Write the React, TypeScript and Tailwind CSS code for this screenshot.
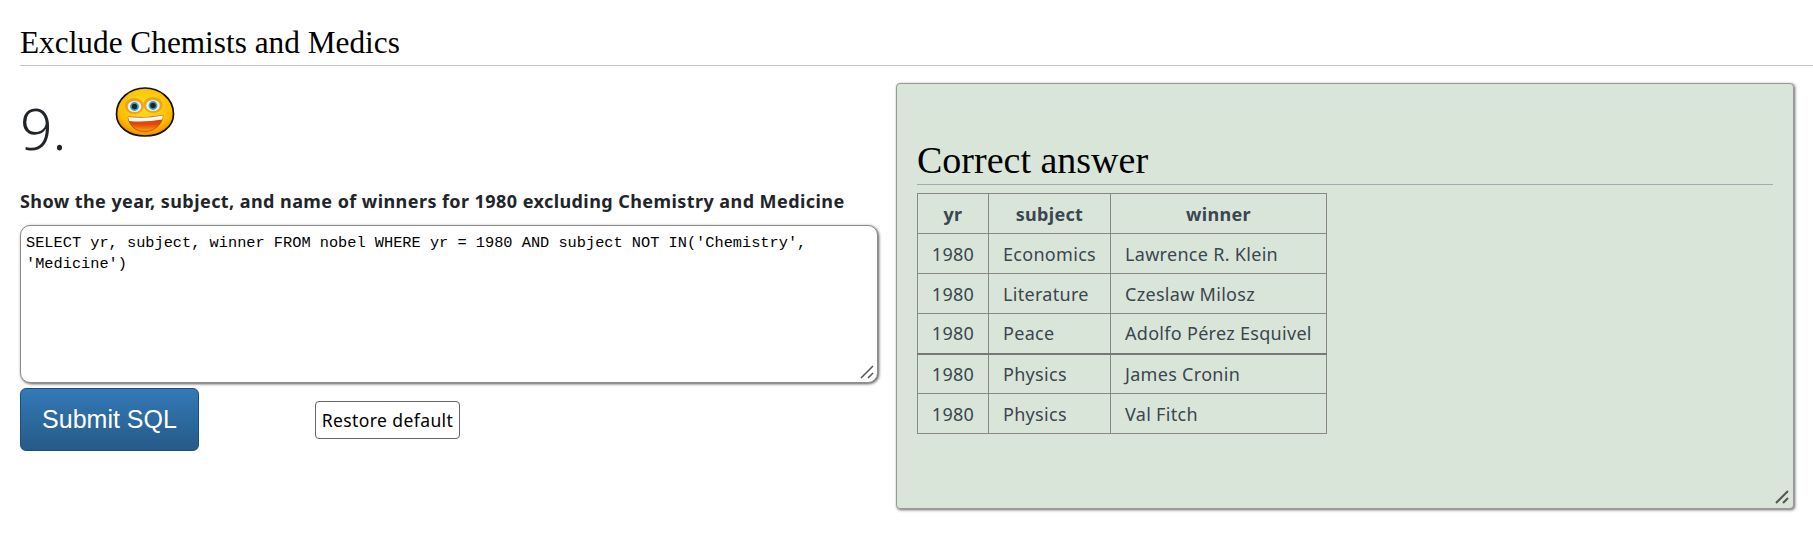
const rows = [
  ["1980", "Economics", "Lawrence R. Klein"],
  ["1980", "Literature", "Czeslaw Milosz"],
  ["1980", "Peace", "Adolfo Pérez Esquivel"],
  ["1980", "Physics", "James Cronin"],
  ["1980", "Physics", "Val Fitch"],
];

function Smiley() {
  return (
    <svg width="60" height="52" viewBox="0 0 60 52" className="ml-[49px] mt-[3px] shrink-0">
      <defs>
        <radialGradient id="face" cx="50%" cy="38%" r="62%">
          <stop offset="0%" stopColor="#ffe020" />
          <stop offset="75%" stopColor="#fdbc00" />
          <stop offset="100%" stopColor="#ea8c00" />
        </radialGradient>
        <linearGradient id="mouth" x1="0" y1="0" x2="0" y2="1">
          <stop offset="0%" stopColor="#d23606" />
          <stop offset="55%" stopColor="#e5480a" />
          <stop offset="100%" stopColor="#f9a414" />
        </linearGradient>
      </defs>
      <path
        d="M30 2 C44 2 58.5 12 58.5 28 C58.5 42 45 50 30 50 C15 50 1.5 42 1.5 28 C1.5 12 16 2 30 2 Z"
        fill="url(#face)"
        stroke="#141008"
        strokeWidth="1.7"
      />
      <ellipse cx="19.5" cy="20" rx="9.5" ry="8" fill="#e8951c" opacity="0.75" />
      <ellipse cx="38" cy="19" rx="9.5" ry="8" fill="#e8951c" opacity="0.75" />
      <ellipse cx="19.5" cy="20.5" rx="6.8" ry="5.6" fill="#e9f2f4" />
      <ellipse cx="38" cy="19.5" rx="6.8" ry="5.6" fill="#e9f2f4" />
      <circle cx="19.5" cy="20.5" r="4.4" fill="#2f9fc4" />
      <circle cx="38" cy="19.5" r="4.4" fill="#2f9fc4" />
      <circle cx="19.5" cy="20.5" r="2.7" fill="#17242c" />
      <circle cx="38" cy="19.5" r="2.7" fill="#17242c" />
      <path d="M13 31 Q30 33 48 29.5 C47 40 38 45.5 30 45.5 C20 45.5 14.5 40 13 31 Z" fill="url(#mouth)" stroke="#a83400" strokeWidth="0.6" />
      <path d="M13 31 Q30 33 48 29.5 L47.2 33.5 Q30 36.5 14.2 35 Z" fill="#fbfbfb" />
    </svg>
  );
}

function Grip({ width }: { width: number }) {
  return (
    <svg width="14" height="14" viewBox="0 0 14 14" className="absolute right-[4px] bottom-[4px] pointer-events-none">
      <path d="M1 13 L13 1 M8 13 L13 8" stroke="#555" strokeWidth={width} fill="none" />
    </svg>
  );
}

export default function App() {
  return (
    <div className="bg-white min-h-[559px] pl-5 font-['Noto_Sans',sans-serif] text-[#212529]">
      <h2 className="pt-[25px] pb-[5px] border-b border-[#c2c6ca] font-['Liberation_Serif',serif] text-[31.3px] leading-[35px] text-black">
        Exclude Chemists and Medics
      </h2>
      <div className="flex mt-[17px] pr-[19px] gap-[18px]">
        <div className="w-[858px] shrink-0">
          <div className="flex items-start h-[105px]">
            <h1 className="font-light text-[57px] leading-[90px]">9.</h1>
            <Smiley />
          </div>
          <p className="font-bold text-[18px] tracking-[0.43px] leading-[26px] whitespace-nowrap">
            Show the year, subject, and name of winners for 1980 excluding Chemistry and Medicine
          </p>
          <div className="relative mt-[11px] h-[158px]">
            <textarea
              className="block w-full h-full px-[5px] pt-[7px] bg-white border border-[#8d8d8d] rounded-[10px] shadow-[1px_1px_3px_#555] font-['Liberation_Mono',monospace] text-[15.3px] leading-[21px] text-black outline-none resize-none"
              defaultValue="SELECT yr, subject, winner FROM nobel WHERE yr = 1980 AND subject NOT IN('Chemistry', 'Medicine')"
            />
            <Grip width={1.5} />
          </div>
          <div className="flex items-start mt-[5px]">
            <button className="w-[179px] h-[63px] rounded-[6px] border border-[#1f4e79] bg-gradient-to-b from-[#337ab7] to-[#265a88] font-['Liberation_Sans',sans-serif] text-[25px] text-white">
              Submit SQL
            </button>
            <button className="ml-[116px] mt-[13px] w-[145px] h-[38px] pt-[2px] rounded-[4px] border border-[#666] bg-white text-[17.5px] tracking-[0.4px] leading-none text-black">
              Restore default
            </button>
          </div>
        </div>
        <div className="relative flex-1 h-[426px] bg-[#dae5d9] border border-[#999] rounded-[4px] shadow-[1px_1px_3px_#666] px-5">
          <h2 className="mt-[55px] pb-[3px] border-b border-[#a3aab0] font-['Liberation_Serif',serif] text-[38px] leading-[42px] text-black">
            Correct answer
          </h2>
          <table className="mt-2 border-collapse text-[18px] tracking-[0.3px] text-[#3a4650]">
            <thead>
              <tr className="h-10">
                <th className="border border-[#888] w-[71px] pt-[2px] font-bold">yr</th>
                <th className="border border-[#888] w-[120px] pt-[2px] font-bold">subject</th>
                <th className="border border-[#888] w-[216px] pt-[2px] font-bold">winner</th>
              </tr>
            </thead>
            <tbody>
              {rows.map((row, i) => (
                <tr key={i} className={i === 2 ? "h-10 border-b-2 border-b-[#777]" : "h-10"}>
                  <td className="border border-[#888] pt-px text-center">{row[0]}</td>
                  <td className="border border-[#888] pt-px px-[14px]">{row[1]}</td>
                  <td className="border border-[#888] pt-px px-[14px] whitespace-nowrap">{row[2]}</td>
                </tr>
              ))}
            </tbody>
          </table>
          <Grip width={2} />
        </div>
      </div>
    </div>
  );
}
